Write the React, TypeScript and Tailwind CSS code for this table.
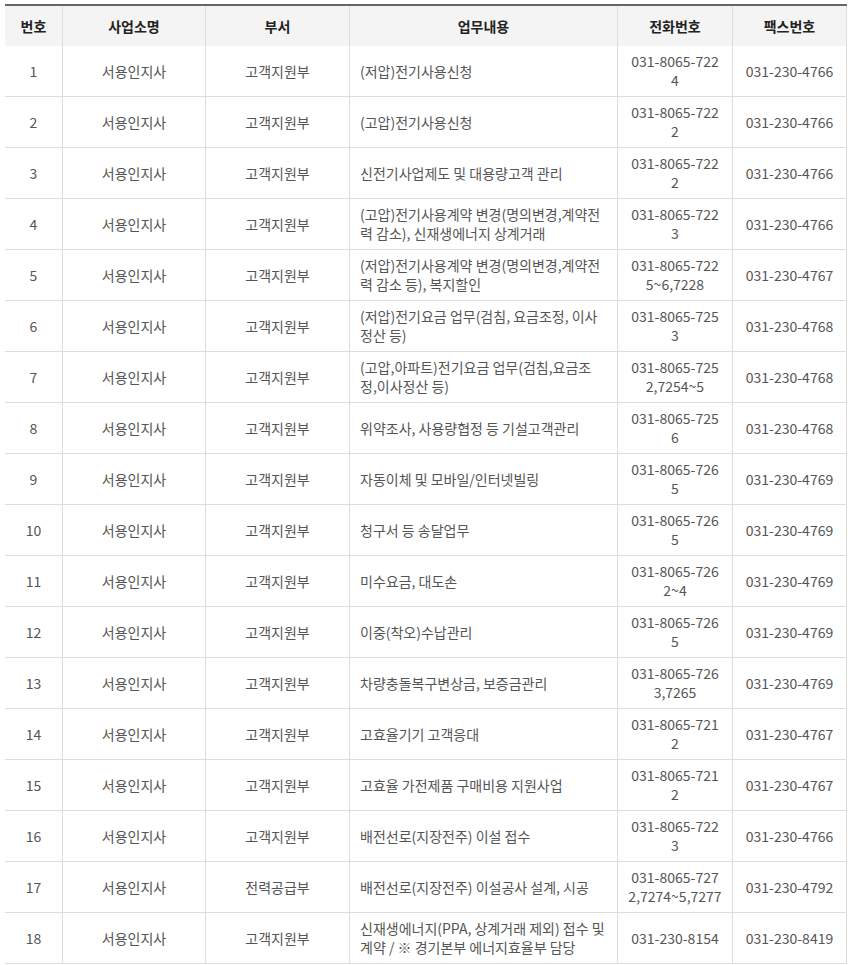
import React from 'react';

const rows = [
  { dept: '고객지원부', work: '(저압)전기사용신청', tel: '031-8065-7224', fax: '031-230-4766' },
  { dept: '고객지원부', work: '(고압)전기사용신청', tel: '031-8065-7222', fax: '031-230-4766' },
  { dept: '고객지원부', work: '신전기사업제도 및 대용량고객 관리', tel: '031-8065-7222', fax: '031-230-4766' },
  { dept: '고객지원부', work: '(고압)전기사용계약 변경(명의변경,계약전력 감소), 신재생에너지 상계거래', tel: '031-8065-7223', fax: '031-230-4766' },
  { dept: '고객지원부', work: '(저압)전기사용계약 변경(명의변경,계약전력 감소 등), 복지할인', tel: '031-8065-7225~6,7228', fax: '031-230-4767' },
  { dept: '고객지원부', work: '(저압)전기요금 업무(검침, 요금조정, 이사정산 등)', tel: '031-8065-7253', fax: '031-230-4768' },
  { dept: '고객지원부', work: '(고압,아파트)전기요금 업무(검침,요금조정,이사정산 등)', tel: '031-8065-7252,7254~5', fax: '031-230-4768' },
  { dept: '고객지원부', work: '위약조사, 사용량협정 등 기설고객관리', tel: '031-8065-7256', fax: '031-230-4768' },
  { dept: '고객지원부', work: '자동이체 및 모바일/인터넷빌링', tel: '031-8065-7265', fax: '031-230-4769' },
  { dept: '고객지원부', work: '청구서 등 송달업무', tel: '031-8065-7265', fax: '031-230-4769' },
  { dept: '고객지원부', work: '미수요금, 대도손', tel: '031-8065-7262~4', fax: '031-230-4769' },
  { dept: '고객지원부', work: '이중(착오)수납관리', tel: '031-8065-7265', fax: '031-230-4769' },
  { dept: '고객지원부', work: '차량충돌복구변상금, 보증금관리', tel: '031-8065-7263,7265', fax: '031-230-4769' },
  { dept: '고객지원부', work: '고효율기기 고객응대', tel: '031-8065-7212', fax: '031-230-4767' },
  { dept: '고객지원부', work: '고효율 가전제품 구매비용 지원사업', tel: '031-8065-7212', fax: '031-230-4767' },
  { dept: '고객지원부', work: '배전선로(지장전주) 이설 접수', tel: '031-8065-7223', fax: '031-230-4766' },
  { dept: '전력공급부', work: '배전선로(지장전주) 이설공사 설계, 시공', tel: '031-8065-7272,7274~5,7277', fax: '031-230-4792' },
  { dept: '고객지원부', work: '신재생에너지(PPA, 상계거래 제외) 접수 및 계약 / ※ 경기본부 에너지효율부 담당', tel: '031-230-8154', fax: '031-230-8419' },
];

const heads = ['번호', '사업소명', '부서', '업무내용', '전화번호', '팩스번호'];

const App = () => {
  return (
    <div className="pt-[4px] pl-[5px] bg-white min-h-screen" style={{ fontFamily: '"Noto Sans CJK KR", "Noto Sans", sans-serif' }}>
      <div className="w-[842px] border-t-2 border-[#666] grid grid-cols-[58px_143px_144px_268px_115px_114px] text-[14px] leading-[19px]">
        {heads.map((h, i) => (
          <div key={i} className="h-[40px] bg-[#f4f4f4] border-r border-[#ddd] flex items-center justify-center font-bold text-[#222]">
            {h}
          </div>
        ))}
        {rows.map((e, i) => (
          <React.Fragment key={i}>
            <div className="h-[51px] border-r border-b border-[#ddd] flex items-center justify-center text-[#555]">{i + 1}</div>
            <div className="h-[51px] border-r border-b border-[#ddd] flex items-center justify-center text-[#555]">서용인지사</div>
            <div className="h-[51px] border-r border-b border-[#ddd] flex items-center justify-center text-[#555]">{e.dept}</div>
            <div className="h-[51px] border-r border-b border-[#ddd] flex items-center px-[10px] text-[#555] break-all">{e.work}</div>
            <div className="h-[51px] border-r border-b border-[#ddd] flex items-center justify-center px-[10px] text-center text-[#555] break-all">
              <p className="w-full">{e.tel}</p>
            </div>
            <div className="h-[51px] border-r border-b border-[#ddd] flex items-center justify-center text-[#555]">{e.fax}</div>
          </React.Fragment>
        ))}
      </div>
    </div>
  );
};

export default App;
